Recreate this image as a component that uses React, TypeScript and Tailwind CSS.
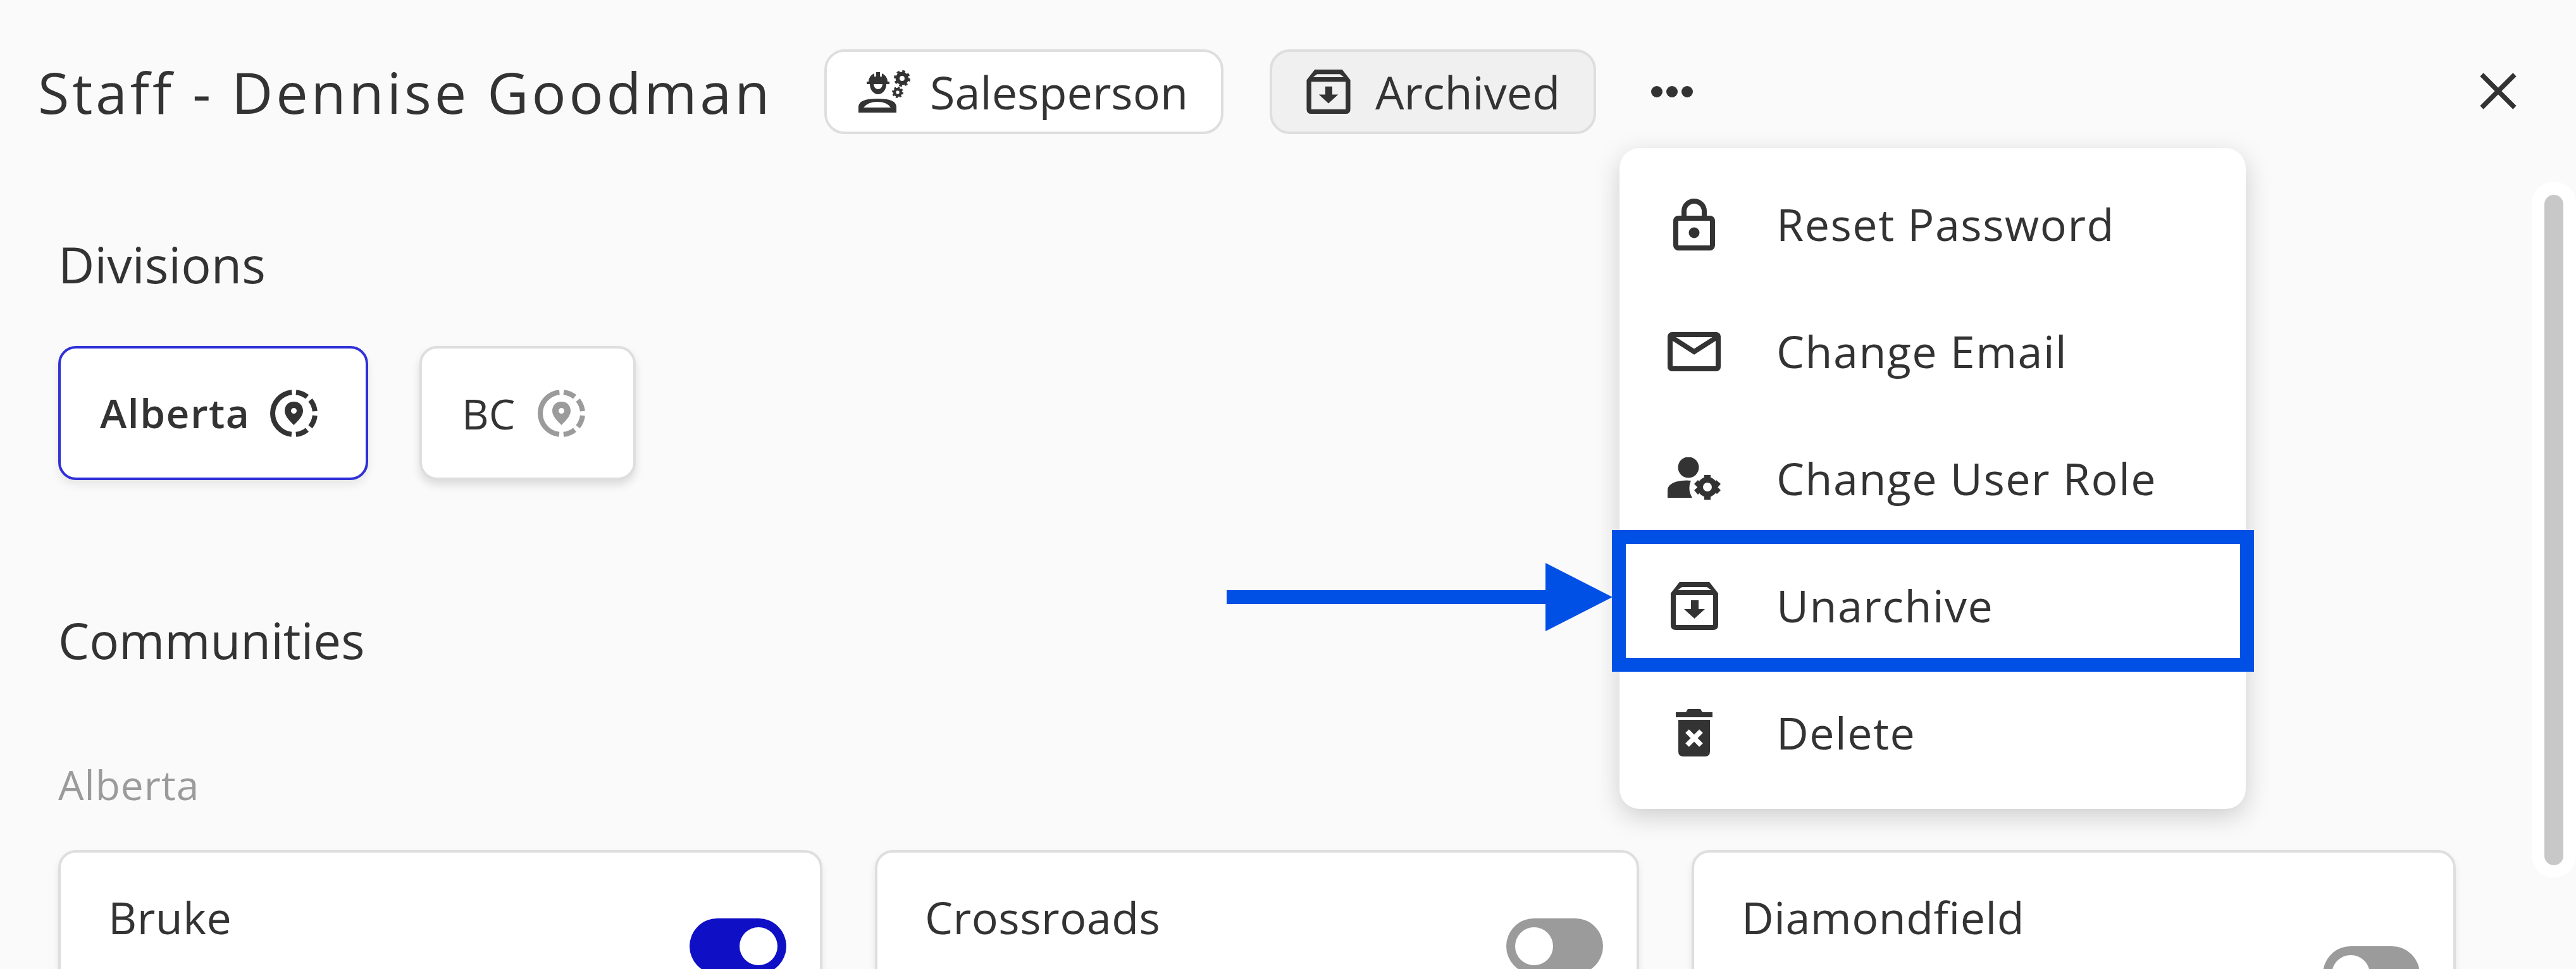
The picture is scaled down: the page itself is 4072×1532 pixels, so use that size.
import { ReactNode } from 'react';

const FONT = "font-['Open_Sans','Noto_Sans',sans-serif]";

function ArchiveIcon({ className }: { className: string }) {
  return (
    <svg viewBox="0 0 75 76" className={className} fill="#333">
      <path
        fillRule="evenodd"
        d="M14 0h47l14 18v50q0 8-8 8H8q-8 0-8-8V18zM18 8l-7 5h53l-7-5zM8 21v47h59V21z"
      />
      <path d="M32 29h12v14h10L37.500 58 21 43h11z" />
    </svg>
  );
}

function Gear({ cx, cy, r, teeth }: { cx: number; cy: number; r: number; teeth: number }) {
  const outer = r * 0.82;
  const dash = (2 * Math.PI * outer) / teeth / 2;
  return (
    <g fill="none" stroke="#333">
      <circle cx={cx} cy={cy} r={r * 0.55} strokeWidth={r * 0.5} />
      <circle cx={cx} cy={cy} r={outer} strokeWidth={r * 0.36} strokeDasharray={`${dash} ${dash}`} />
    </g>
  );
}

function HardHatIcon({ className }: { className: string }) {
  return (
    <svg viewBox="0 0 84 68" className={className} fill="#333">
      <path d="M16 18a15 15 0 0 1 9-13v5h3V3h6v7h3V5a15 15 0 0 1 9 13h3v4H13v-4z" />
      <path fillRule="evenodd" d="M18 22h26a13 16 0 0 1-26 0zM24 22a7 8 0 0 0 14 0z" />
      <path
        fillRule="evenodd"
        d="M0 67v-9q0-13 30-13t30 13v9zM8 59h43q-6-9-21-9T8 59z"
      />
      <Gear cx={69} cy={13} r={13} teeth={8} />
      <Gear cx={62} cy={35} r={9} teeth={8} />
    </svg>
  );
}

function LockIcon() {
  return (
    <svg viewBox="0 0 66 83" className="h-[83px] w-[66px]" fill="none" stroke="#333" strokeWidth="8">
      <rect x="4" y="32" width="58" height="47" rx="4" />
      <path d="M17 32V21a16 16 0 0 1 32 0v11" />
      <circle cx="33" cy="55" r="8.500" fill="#333" stroke="none" />
    </svg>
  );
}

function MailIcon() {
  return (
    <svg viewBox="0 0 84 62" className="h-[62px] w-[84px]" fill="none" stroke="#333" strokeWidth="8">
      <rect x="4" y="4" width="76" height="54" rx="3" />
      <path d="M6 8l36 23L78 8" />
    </svg>
  );
}

function UserGearIcon() {
  return (
    <svg viewBox="0 0 84 68" className="h-[68px] w-[84px]" fill="#333">
      <circle cx="33" cy="16" r="16.500" />
      <path d="M0 64V52q0-12 22-15 9-1 15 0-6 14 2 27z" />
      <circle cx="63" cy="47" r="11.500" fill="none" stroke="#333" strokeWidth="9" />
      <path d="M58 28h10v8H58zM58 58h10v9H58zM42 42l6-6 7 7-6 6zM71 51l6-6 7 7-6 6zM71 43l6-7 7 6-6 7zM42 52l7-6 6 6-7 7z" />
    </svg>
  );
}

function TrashIcon() {
  return (
    <svg viewBox="0 0 58 75" className="h-[75px] w-[58px]">
      <path fill="#333" d="M0 5h16l3-5h20l3 5h16v8H0z" />
      <path fill="#333" d="M4 17h50v50q0 8-8 8H12q-8 0-8-8z" />
      <path fill="none" stroke="#fff" strokeWidth="8" d="M18 35l22 22M40 35L18 57" />
    </svg>
  );
}

function PinTargetIcon({ color }: { color: string }) {
  return (
    <svg viewBox="0 0 75 75" className="size-[75px]" fill="none">
      <circle
        cx="37.500"
        cy="37.500"
        r="33.500"
        stroke={color}
        strokeWidth="8"
        strokeDasharray="19.300 7 19.300 7 19.300 7 19.300 7 98.250 7"
        strokeDashoffset="-3.500"
        transform="rotate(-90 37.500 37.500)"
      />
      <path
        fill={color}
        fillRule="evenodd"
        d="M37.500 19c8.500 0 14.500 6 14.500 14.500 0 8-7 15-14.500 22.500C30 48.500 23 41.500 23 33.500 23 25 29 19 37.500 19zm0 10a4.500 4.500 0 1 0 0 9 4.500 4.500 0 0 0 0-9z"
      />
    </svg>
  );
}

function MenuRow({ icon, label }: { icon: ReactNode; label: string }) {
  return (
    <div className="flex h-[201px] items-center">
      <div className="flex w-[248px] shrink-0 justify-center pr-[12px]">{icon}</div>
      <span className="text-[70px] tracking-[1.5px] text-[#333]">{label}</span>
    </div>
  );
}

function Toggle({ on, className }: { on: boolean; className: string }) {
  return (
    <div
      className={`flex h-[88px] w-[153px] items-center rounded-full px-[14px] ${
        on ? 'justify-end bg-[#0f0fc6]' : 'justify-start bg-[#9b9b9b]'
      } ${className}`}
    >
      <div className="size-[60px] rounded-full bg-white" />
    </div>
  );
}

function CommunityCard({ name, on, toggleClass }: { name: string; on: boolean; toggleClass: string }) {
  return (
    <div className="relative h-[400px] rounded-[28px] border-4 border-[#dedede] bg-white pt-[56px] pl-[75px] shadow-[0_6px_12px_rgba(0,0,0,0.08)]">
      <span className="text-[70px] leading-[92px] tracking-[0.5px] text-[#333]">{name}</span>
      <Toggle on={on} className={`absolute ${toggleClass}`} />
    </div>
  );
}

export default function App() {
  return (
    <div className={`relative h-[1532px] w-[4072px] overflow-hidden bg-[#fafafa] ${FONT}`}>
      <header className="flex h-[368px] items-start pt-[78px] pl-[60px]">
        <h1 className="w-[1243px] text-[90px] leading-[134px] tracking-[4.800px] text-[#333]">Staff - Dennise Goodman</h1>
        <div className="flex h-[134px] w-[631px] items-center gap-[29px] rounded-[32px] border-4 border-[#dedede] bg-white pl-[50px]">
          <HardHatIcon className="h-[68px] w-[84px]" />
          <span className="text-[72px] text-[#333]">Salesperson</span>
        </div>
        <div className="ml-[73px] flex h-[134px] w-[516px] items-center gap-[39px] rounded-[32px] border-4 border-[#dedede] bg-[#f0f0f0] pl-[54px]">
          <ArchiveIcon className="size-[70px]" />
          <span className="text-[72px] text-[#333]">Archived</span>
        </div>
        <div className="ml-[87px] flex h-[134px] items-center gap-[6px]">
          <div className="size-[18px] rounded-full bg-[#333]" />
          <div className="size-[18px] rounded-full bg-[#333]" />
          <div className="size-[18px] rounded-full bg-[#333]" />
        </div>
      </header>

      <main className="pl-[92px] pr-[190px]">
        <h2 className="text-[79px] leading-[100px] text-[#333]">Divisions</h2>
        <div className="mt-[79px] flex gap-[81px]">
          <div className="flex h-[212px] w-[490px] items-center gap-[32px] rounded-[28px] border-4 border-[#3030d8] bg-white pl-[62px] shadow-[0_8px_14px_rgba(0,0,0,0.08)]">
            <span className="text-[64px] font-semibold tracking-[1.500px] text-[#333]">Alberta</span>
            <PinTargetIcon color="#333" />
          </div>
          <div className="flex h-[212px] w-[342px] items-center gap-[36px] rounded-[28px] border-4 border-[#dedede] bg-white pl-[63px] shadow-[0_8px_14px_rgba(0,0,0,0.12)]">
            <span className="text-[66px] text-[#333]">BC</span>
            <PinTargetIcon color="#9b9b9b" />
          </div>
        </div>
        <h2 className="mt-[203px] text-[78px] leading-[100px] text-[#333]">Communities</h2>
        <p className="mt-[134px] text-[64px] leading-[90px] tracking-[1px] text-[#9b9b9b]">Alberta</p>
        <div className="mt-[58px] grid grid-cols-3 gap-[83px]">
          <CommunityCard name="Bruke" on toggleClass="right-[53px] top-[104px]" />
          <CommunityCard name="Crossroads" on={false} toggleClass="right-[53px] top-[104px]" />
          <CommunityCard name="Diamondfield" on={false} toggleClass="right-[53px] top-[148px]" />
        </div>
      </main>

      <svg viewBox="0 0 58 58" className="absolute top-[115px] left-[3920px] size-[58px]" fill="none" stroke="#333" strokeWidth="7.500">
        <path d="M3 3l52 52M55 3L3 55" />
      </svg>

      <div className="absolute top-[287px] right-0 flex h-[1101px] w-[70px] justify-center rounded-full bg-white pt-[21px] pb-[20px]">
        <div className="w-[30px] rounded-full bg-[#c8c8c8]" />
      </div>

      <div className="absolute top-[234px] left-[2560px] w-[990px] rounded-[32px] bg-white py-[20px] shadow-[0_12px_40px_rgba(0,0,0,0.18)]">
        <MenuRow icon={<LockIcon />} label="Reset Password" />
        <MenuRow icon={<MailIcon />} label="Change Email" />
        <MenuRow icon={<UserGearIcon />} label="Change User Role" />
        <MenuRow icon={<ArchiveIcon className="h-[76px] w-[75px]" />} label="Unarchive" />
        <MenuRow icon={<TrashIcon />} label="Delete" />
      </div>

      <div className="absolute top-[838px] left-[2548px] h-[224px] w-[1015px] border-[22px] border-[#0050e6]" />
      <div className="absolute top-[889px] left-[1939px] flex h-[109px] w-[610px] items-center">
        <div className="h-[22px] w-[504px] bg-[#0050e6]" />
        <div className="h-0 w-0 border-y-[54.500px] border-l-[106px] border-y-transparent border-l-[#0050e6]" />
      </div>
    </div>
  );
}
